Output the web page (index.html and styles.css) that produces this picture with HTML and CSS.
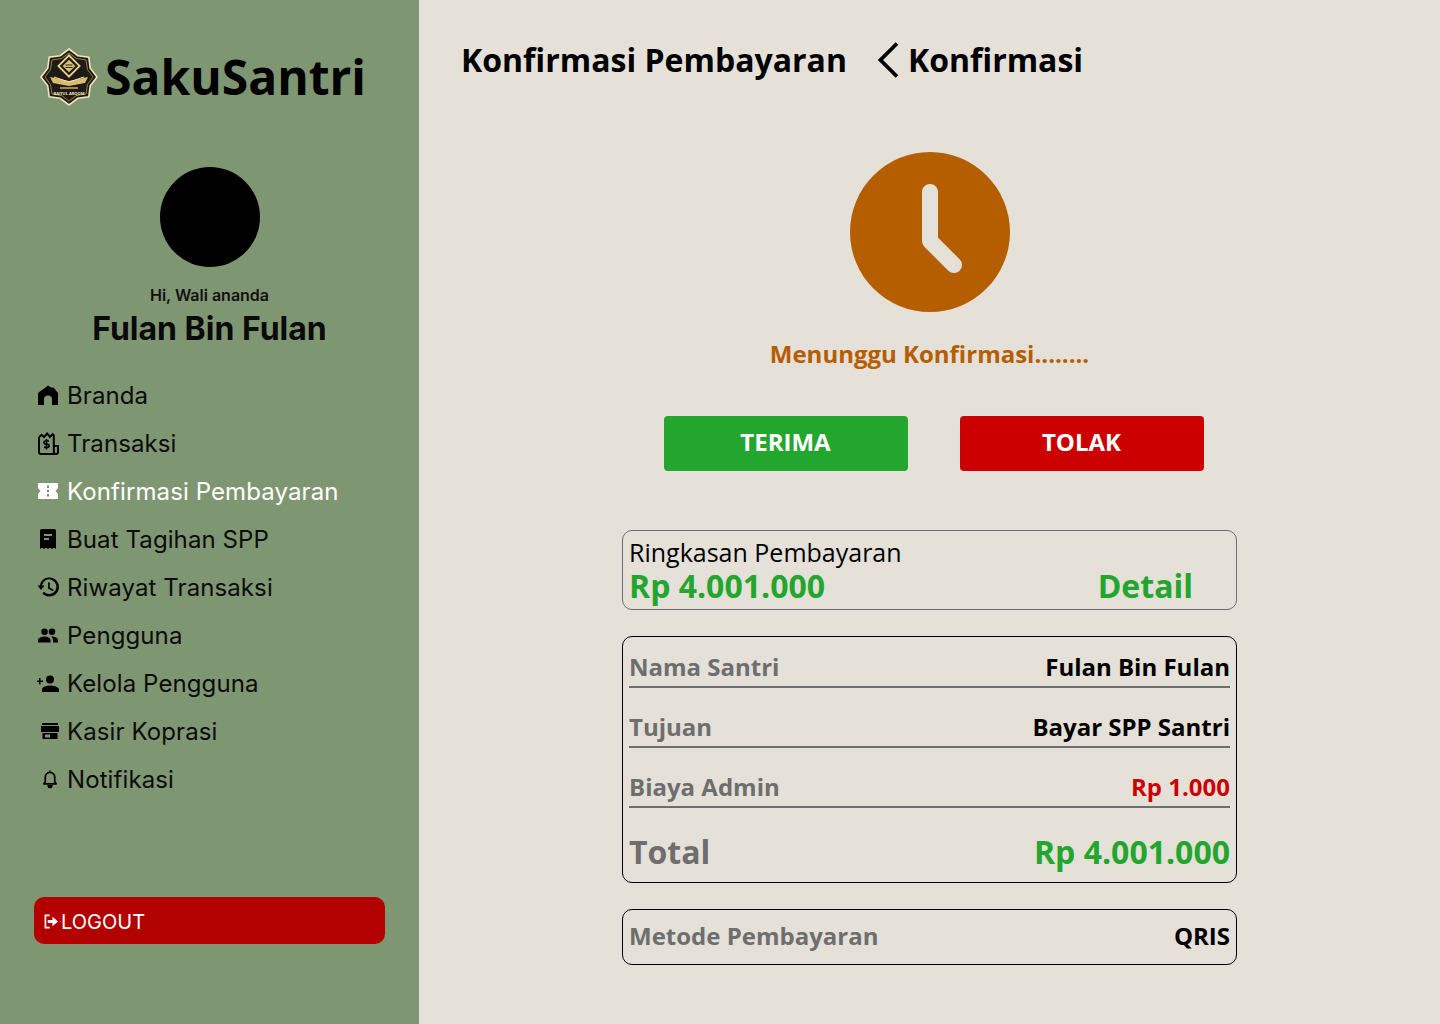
FILE: index.html
```html
<!DOCTYPE html>
<html lang="id">
<head>
<meta charset="utf-8">
<title>Konfirmasi Pembayaran</title>
<link rel="stylesheet" href="styles.css">
</head>
<body>
<div class="app">
  <aside class="sidebar">
    <div class="brand">
      <svg class="logo" viewBox="0 0 58 58">
        <polygon points="29,1 37.800,7.750 48.800,9.200 50.250,20.200 57,29 50.250,37.800 48.800,48.800 37.800,50.250 29,57 20.200,50.250 9.200,48.800 7.750,37.800 1,29 7.750,20.200 9.200,9.200 20.200,7.750" fill="#1d1a17" stroke="#f4e6b8" stroke-width="1.600"/>
        <polygon points="29,5 36.500,10.500 46,12 47.500,21.500 53,29 47.500,36.500 46,46 36.500,47.500 29,53 21.500,47.500 12,46 10.500,36.500 5,29 10.500,21.500 12,12 21.500,10.500" fill="none" stroke="#c9a95a" stroke-width=".7"/>
        <rect x="21.500" y="10.500" width="15" height="15" transform="rotate(45 29 18)" fill="none" stroke="#e9cf85" stroke-width="1.800"/>
        <rect x="24.500" y="13.500" width="9" height="9" transform="rotate(45 29 18)" fill="#d8bd72"/>
        <path d="M25.500 17h7M25.500 19.500h7" stroke="#1d1a17" stroke-width=".9"/>
        <path d="M10 29l19 4 19-4-3 6-16 3-16-3z" fill="#d9bb6a"/>
        <path d="M14 29l15 5 15-5" fill="none" stroke="#f3e3b0" stroke-width="1"/>
        <path d="M20 40h18" stroke="#d9bb6a" stroke-width="1.400"/>
        <text class="logo-text" x="29" y="46.500" text-anchor="middle">BAITUL ARQOM</text>
      </svg>
      <span class="brand-name">SakuSantri</span>
    </div>
    <div class="avatar"></div>
    <p class="greeting">Hi, Wali ananda</p>
    <h2 class="user-name">Fulan Bin Fulan</h2>
    <nav class="nav">
      <a class="nav-item"><span class="nav-icon"><svg viewBox="0 0 20 20" width="20" height="20"><path d="M10 0.500 13 2.500h2.500L20 8v12h-6v-5.500a4 4 0 0 0-8 0V20H0V8z" fill="#000"/></svg></span>Branda</a>
      <a class="nav-item"><span class="nav-icon"><svg viewBox="0 0 21 23" width="21" height="23"><path d="M1.200 5 3.500 2.800 6 5l3.200-3.500L12 5l2.500-2.800 1.300 1.300V16M16 14h4v6a2 2 0 0 1-2 2H3a2 2 0 0 1-2-2V5M15.800 16v4a2 2 0 0 0 2 2" fill="none" stroke="#000" stroke-width="2"/><path d="M11 9H7.500a1.500 1.500 0 0 0 0 3.200h2a1.500 1.500 0 0 1 0 3.200H6M8.500 7v10.500" fill="none" stroke="#000" stroke-width="1.600"/></svg></span>Transaksi</a>
      <a class="nav-item is-active"><span class="nav-icon"><svg viewBox="0 0 20 16" width="20" height="16"><path fill-rule="evenodd" d="M0 0h20v5l-2.500 3 2.500 3v5H0v-5l2.500-3L0 5zM9 2.500v2.500h2V2.500zM9 6.800v2.400h2V6.800zM9 11v2.500h2V11z" fill="#fff"/></svg></span>Konfirmasi Pembayaran</a>
      <a class="nav-item"><span class="nav-icon"><svg viewBox="0 0 16 20" width="16" height="20"><path fill-rule="evenodd" d="M2 0h12a2 2 0 0 1 2 2v18l-2-1.500-2 1.500-2-1.500-2 1.500-2-1.500-2 1.500-2-1.500-2 1.500V2a2 2 0 0 1 2-2zM4 5v2h8V5zM4 9v2h5V9z" fill="#000"/></svg></span>Buat Tagihan SPP</a>
      <a class="nav-item"><span class="nav-icon"><svg viewBox="0 0 22 22" width="22" height="22"><path d="M12 1.500a9.500 9.500 0 0 0-9.300 8H.5L4 14l3.500-4.500H4.900a7.300 7.300 0 1 1 2 6.300l-1.500 1.600A9.500 9.500 0 1 0 12 1.500zM11 6.500v6l4.800 2.800.9-1.500-3.900-2.300v-5z" fill="#000"/></svg></span>Riwayat Transaksi</a>
      <a class="nav-item"><span class="nav-icon"><svg viewBox="0 0 20 15" width="20" height="15"><path d="M14 7a3.300 3.300 0 1 0 0-6.600A3.300 3.300 0 0 0 14 7zM6.500 7a3.300 3.300 0 1 0 0-6.600A3.300 3.300 0 0 0 6.500 7zM6.500 8.500C4 8.500 0 9.800 0 12v2.500h12.500V12c0-2.200-3.500-3.500-6-3.500zM14 8.500h-1c1.200.8 2 2 2 3.500v2.500h5V12c0-2.200-3.500-3.500-6-3.500z" fill="#000"/></svg></span>Pengguna</a>
      <a class="nav-item"><span class="nav-icon"><svg viewBox="0 0 22 17" width="22" height="17"><path d="M13 8.500a4 4 0 1 0 0-8 4 4 0 0 0 0 8zM3.500 5.500V3H2v2.500H0V7h2v2.500h1.500V7h2.500V5.500zM13 10.500c-2.700 0-8 1.300-8 4V17h17v-2.500c0-2.700-6.300-4-9-4z" fill="#000"/></svg></span>Kelola Pengguna</a>
      <a class="nav-item"><span class="nav-icon nav-icon-right"><svg viewBox="0 0 18 16" width="18" height="16"><path d="M1 0h16v2H1zM0 3h18v6H0zM1.500 10h15v6h-15zM4 11.500v3h5v-3z" fill="#000" fill-rule="evenodd"/></svg></span>Kasir Koprasi</a>
      <a class="nav-item"><span class="nav-icon nav-icon-right"><svg viewBox="0 0 16 20" width="16" height="19"><path d="M8 2.500a5 5 0 0 1 5 5v5l1.500 2H1.500l1.500-2v-5a5 5 0 0 1 5-5z" fill="none" stroke="#000" stroke-width="1.800" stroke-linejoin="round"/><path d="M8 0.500v2M6 16.500h4a2 2 0 0 1-4 0z" stroke="#000" stroke-width="1.400" fill="#000"/></svg></span>Notifikasi</a>
    </nav>
    <button class="logout">
      <svg viewBox="0 0 16 16" width="15" height="15"><path d="M6 1.500H1.500v13H6" fill="none" stroke="#fff" stroke-width="1.800"/><path d="M4 6.500h5V3l6 5-6 5V9.500H4z" fill="#fff"/></svg>
      LOGOUT
    </button>
  </aside>
  <main class="main">
    <header class="page-head">
      <h1 class="page-title">Konfirmasi Pembayaran</h1>
      <div class="crumb">
        <svg class="chevron" viewBox="0 0 24 38" width="24" height="38"><path d="M20 2.500 3.500 19 20 35.500" fill="none" stroke="#000" stroke-width="3.800"/></svg>
        <span>Konfirmasi</span>
      </div>
    </header>
    <div class="content">
      <div class="clock">
        <svg viewBox="0 0 160 160" width="160" height="160"><path d="M80 40v49l24 24" fill="none" stroke="#E5E0D8" stroke-width="16" stroke-linecap="round" stroke-linejoin="round"/></svg>
      </div>
      <p class="status">Menunggu Konfirmasi........</p>
      <div class="actions">
        <button class="btn btn-accept">TERIMA</button>
        <button class="btn btn-reject">TOLAK</button>
      </div>
      <section class="card card-summary">
        <div class="summary-label">Ringkasan Pembayaran</div>
        <div class="summary-row">
          <span>Rp 4.001.000</span>
          <span class="summary-detail">Detail</span>
        </div>
      </section>
      <section class="card card-detail">
        <div class="row"><span class="label">Nama Santri</span><span class="value">Fulan Bin Fulan</span></div>
        <div class="row"><span class="label">Tujuan</span><span class="value">Bayar SPP Santri</span></div>
        <div class="row"><span class="label">Biaya Admin</span><span class="value value-red">Rp 1.000</span></div>
        <div class="row row-total"><span class="label">Total</span><span class="value value-green">Rp 4.001.000</span></div>
      </section>
      <section class="card card-method">
        <span class="label">Metode Pembayaran</span><span class="value">QRIS</span>
      </section>
    </div>
  </main>
</div>
</body>
</html>
```
FILE: styles.css
```css
* { box-sizing: border-box; }
html, body { margin: 0; height: 100%; }
body { font-family: "Inter", sans-serif; color: #000; background: #E5E0D8; }
p, h1, h2 { margin: 0; }

.app { display: flex; height: 1024px; overflow: hidden; }

.sidebar {
  width: 419px;
  flex: none;
  background: #7F9672;
  padding: 48px 34px 0;
  display: flex;
  flex-direction: column;
}
.brand { display: flex; align-items: center; gap: 7px; height: 58px; padding-left: 6px; }
.logo { width: 58px; height: 58px; flex: none; }
.logo-text { font: 700 4px "Open Sans", sans-serif; fill: #f4e6b8; }
.brand-name { font-family: "Open Sans", sans-serif; font-weight: 700; font-size: 48px; line-height: 58px; }
.avatar { width: 100px; height: 100px; border-radius: 50%; background: #000; margin: 61px auto 0; }
.greeting { text-align: center; font-size: 16px; font-weight: 600; line-height: 18px; margin-top: 19px; color: #111; }
.user-name { text-align: center; font-size: 32px; font-weight: 700; line-height: 40px; margin-top: 5px; color: #0a0a0a; }

.nav { display: flex; flex-direction: column; margin-top: 22px; }
.nav-item { display: flex; align-items: center; height: 48px; font-size: 24px; letter-spacing: 0.100px; color: #0b0b0b; white-space: nowrap; }
.nav-item.is-active { color: #fff; }
.nav-icon { width: 33px; padding-right: 5px; display: flex; align-items: center; justify-content: center; flex: none; }
.nav-icon svg { flex: none; }
.nav-icon-right { padding-left: 7px; padding-right: 8px; }

.logout {
  margin-top: 94px;
  height: 47px;
  border: 0;
  border-radius: 10px;
  background: #B30000;
  color: #fff;
  font: 400 20px "Inter", sans-serif;
  display: flex;
  align-items: center;
  gap: 2px;
  padding: 2px 0 0 10px;
}

.main { flex: 1; display: flex; flex-direction: column; background: #E5E0D8; }
.page-head { display: flex; align-items: center; height: 121px; padding: 0 0 2px 42px; font-family: "Open Sans", sans-serif; }
.page-title { font-size: 32px; font-weight: 700; line-height: 42px; }
.crumb { display: flex; align-items: center; gap: 7px; margin-left: 30px; font-size: 32px; font-weight: 700; line-height: 42px; }
.chevron { flex: none; }

.content { display: flex; flex-direction: column; align-items: center; font-family: "Open Sans", sans-serif; padding-top: 31px; }
.clock { width: 160px; height: 160px; border-radius: 50%; background: #B55E00; }
.clock svg { display: block; }
.status { margin-top: 25px; font-size: 24px; font-weight: 700; line-height: 33px; color: #B55E00; }
.actions { display: flex; gap: 52px; margin-top: 46px; margin-left: 8px; }
.btn { width: 244px; height: 55px; border: 0; border-radius: 4px; color: #fff; font: 700 24px/33px "Open Sans", sans-serif; padding: 0 0 4px; }
.btn-accept { background: #22A62E; }
.btn-reject { background: #CC0000; }

.card { width: 615px; border: 1px solid #000; border-radius: 10px; padding: 0 6px; }
.card-summary { margin-top: 59px; height: 80px; border-color: #6E6E6E; }
.summary-label { font-size: 25px; line-height: 32px; margin-top: 5px; }
.summary-row { display: flex; justify-content: space-between; font-size: 32px; font-weight: 700; line-height: 36px; color: #22A62E; padding-right: 37px; }

.card-detail { margin-top: 26px; height: 247px; padding-top: 13px; }
.row { display: flex; justify-content: space-between; height: 38px; margin-bottom: 22px; border-bottom: 2px solid #6E6E6E; line-height: 33px; align-items: flex-start; }
.row-total { border: 0; height: 48px; margin: -2px 0 0; line-height: 44px; align-items: center; }
.label { font-size: 24px; font-weight: 700; color: #6E6E6E; }
.value { font-size: 24px; font-weight: 700; color: #000; }
.value-red { color: #CC0000; }
.value-green { color: #22A62E; }
.row-total .label, .row-total .value { font-size: 32px; }

.card-method { margin-top: 26px; height: 56px; display: flex; justify-content: space-between; align-items: center; line-height: 33px; padding-bottom: 3px; }
```
